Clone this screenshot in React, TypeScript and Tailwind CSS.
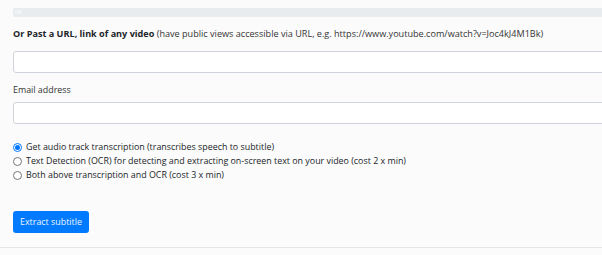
import React from "react";

function Radio({ checked, label }: { checked?: boolean; label: string }) {
  return (
    <label className="flex items-center h-[14px] leading-[14px]">
      {checked ? (
        <span className="w-[9px] h-[9px] rounded-full border border-[#0075ff] bg-white flex items-center justify-center shrink-0">
          <span className="w-[5px] h-[5px] rounded-full bg-[#0075ff]" />
        </span>
      ) : (
        <span className="w-[9px] h-[9px] rounded-full border border-[#767676] bg-white shrink-0" />
      )}
      <span className="ml-[4px] text-[#212529] text-[8.9px]">{label}</span>
    </label>
  );
}

export default function App() {
  return (
    <div
      className="w-[602px] h-[255px] overflow-hidden bg-[#fbfbfb] text-[9.6px]"
      style={{ fontFamily: '"Open Sans", "Noto Sans", sans-serif' }}
    >
      <div className="pl-[13px] w-[660px]">
        <div className="pt-[8px]">
          <div className="h-[9px] bg-[#e9ecef] rounded-[2px] flex items-center pl-[2px]">
            <span className="text-[5px] leading-[5px] text-white">0%</span>
          </div>
        </div>
        <div className="mt-[10px] leading-[14px] text-[#212529] whitespace-nowrap text-[9.1px]">
          <span className="font-bold">Or Past a URL, link of any video</span>{" "}
          <span className="text-[#333]">
            (have public views accessible via URL, e.g. https://www.youtube.com/watch?v=Joc4kJ4M1Bk)
          </span>
        </div>
        <div className="mt-[10px] h-[22px] bg-white border border-[#ced4da] rounded-[3px]" />
        <div className="mt-[10px] leading-[14px] text-[#333] text-[8.9px]">Email address</div>
        <div className="mt-[5px] h-[22px] bg-white border border-[#ced4da] rounded-[3px]" />
        <div className="mt-[16px] flex flex-col">
          <Radio checked label="Get audio track transcription (transcribes speech to subtitle)" />
          <Radio label="Text Detection (OCR) for detecting and extracting on-screen text on your video (cost 2 x min)" />
          <Radio label="Both above transcription and OCR (cost 3 x min)" />
        </div>
        <div className="mt-[29px]">
          <button className="h-[22px] w-[76px] bg-[#007bff] text-[#eef5ff] rounded-[3px] leading-[22px] text-center text-[8.9px]">
            Extract subtitle
          </button>
        </div>
      </div>
      <div className="mt-[14px] border-t border-[#e6e6e6]" />
    </div>
  );
}
